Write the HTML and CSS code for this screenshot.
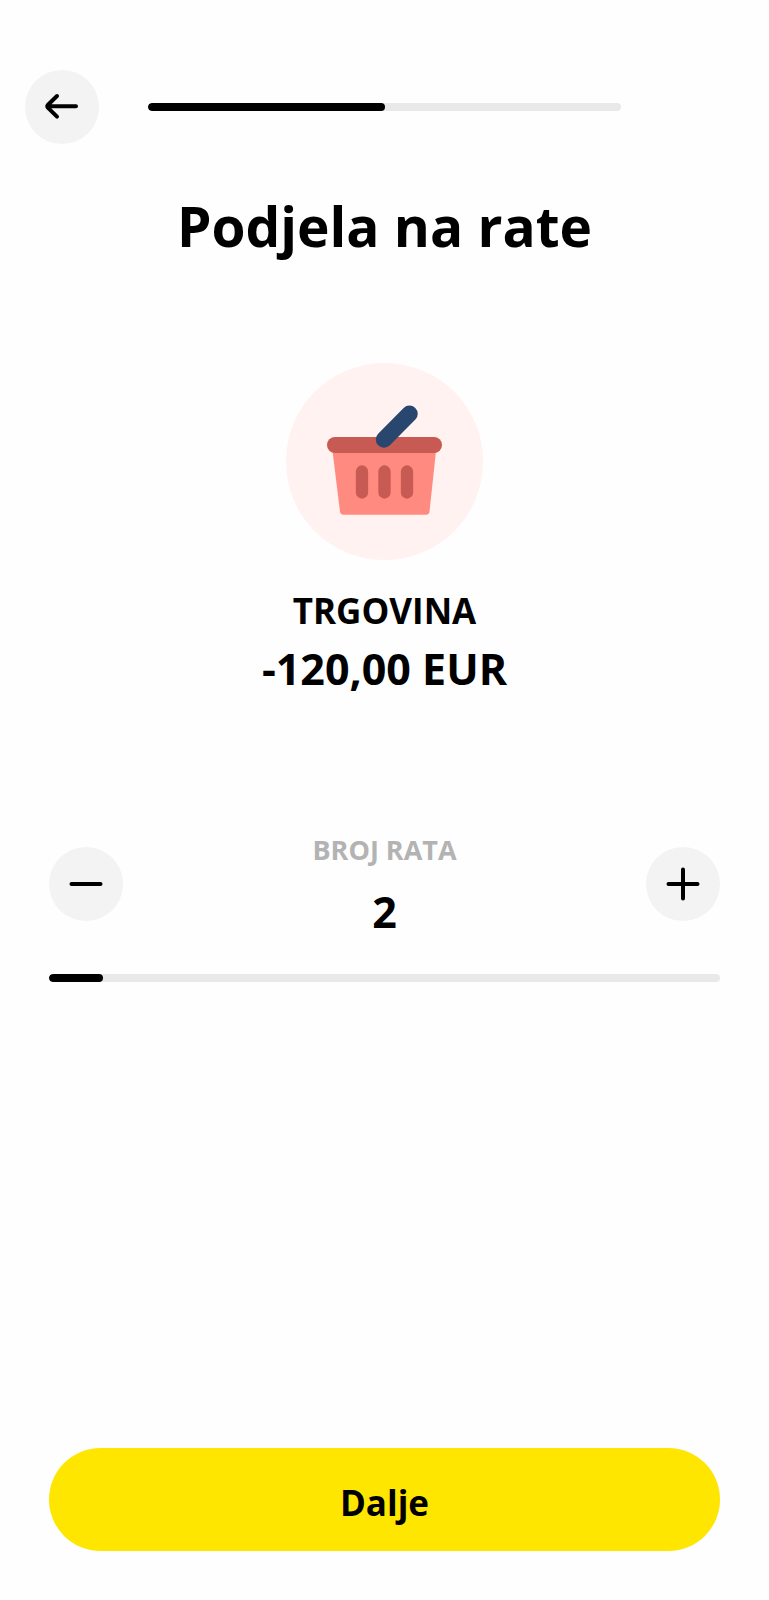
FILE: index.html
```html
<!DOCTYPE html>
<html lang="hr">
<head>
<meta charset="utf-8">
<meta name="viewport" content="width=device-width, initial-scale=1">
<title>Podjela na rate</title>
<link rel="stylesheet" href="styles.css">
</head>
<body>
<div class="screen">
  <header class="topbar">
    <button class="round-button" type="button" aria-label="Natrag">
      <svg class="icon" viewBox="0 0 74 74" aria-hidden="true"><path d="M24 36.300H51M32 26L22.800 35Q21.800 36.300 22.800 37.600L32 46.600"/></svg>
    </button>
    <div class="track" role="progressbar" aria-label="Korak" aria-valuenow="50" aria-valuemin="0" aria-valuemax="100">
      <div class="fill" style="width: 50%"></div>
    </div>
  </header>
  <main class="content">
    <h1 class="title">Podjela na rate</h1>
    <section class="purchase">
      <svg class="category" viewBox="0 0 197 197" aria-hidden="true">
        <circle cx="98.500" cy="98.500" r="98.500" fill="#fff2f0"/>
        <path d="M46.500 88H150L143.500 148.500Q143 151.700 140 151.700H57.500Q54.500 151.700 54 148.500Z" fill="#ff8a80"/>
        <rect x="41" y="74" width="115" height="16" rx="8" fill="#c75a52"/>
        <path d="M76 108.500V129.500M98.500 108.500V129.500M121 108.500V129.500" stroke="#c75a52" stroke-width="12.300" stroke-linecap="round"/>
        <path d="M98 76.500L123.500 50.800" stroke="#28466e" stroke-width="16.500" stroke-linecap="round"/>
      </svg>
      <h2 class="merchant">TRGOVINA</h2>
      <p class="amount">-120,00 EUR</p>
    </section>
    <section class="installments">
      <div class="stepper">
        <button class="round-button" type="button" aria-label="Manje rata">
          <svg class="icon" viewBox="0 0 74 74" aria-hidden="true"><path d="M22.500 37H51.500"/></svg>
        </button>
        <div class="count">
          <span class="count-label" id="count-label">BROJ RATA</span>
          <output class="count-value" aria-labelledby="count-label">2</output>
        </div>
        <button class="round-button" type="button" aria-label="Više rata">
          <svg class="icon" viewBox="0 0 74 74" aria-hidden="true"><path d="M22.500 37H51.500M37 22.500V51.500"/></svg>
        </button>
      </div>
      <div class="track" role="progressbar" aria-labelledby="count-label" aria-valuenow="8" aria-valuemin="0" aria-valuemax="100">
        <div class="fill" style="width: 8%"></div>
      </div>
    </section>
  </main>
  <footer class="footer">
    <button class="next" type="button">Dalje</button>
  </footer>
</div>
</body>
</html>
```
FILE: styles.css
```css
* {
  box-sizing: border-box;
}

body {
  margin: 0;
  background: #fefefe;
  color: #000;
  font-family: "Open Sans", "Noto Sans", sans-serif;
  font-weight: 700;
}

h1, h2, p {
  margin: 0;
  font-weight: 700;
}

button {
  border: 0;
  padding: 0;
  color: inherit;
  font: inherit;
  cursor: pointer;
}

.screen {
  display: flex;
  flex-direction: column;
  min-height: 100vh;
  padding-top: 70px;
}

.topbar {
  display: grid;
  grid-template-columns: 74px 1fr 74px;
  align-items: center;
  gap: 49px;
  padding: 0 25px;
}

.round-button {
  flex: none;
  width: 74px;
  height: 74px;
  border-radius: 50%;
  background: #f3f3f3;
}

.icon {
  display: block;
  width: 100%;
  fill: none;
  stroke: #000;
  stroke-width: 4;
  stroke-linecap: round;
  stroke-linejoin: round;
}

.track {
  height: 8px;
  border-radius: 4px;
  background: #e9e9e9;
  overflow: hidden;
}

.fill {
  height: 100%;
  border-radius: 4px;
  background: #000;
}

.content {
  flex: 1;
  padding: 46px 49px;
}

.title {
  font-size: 55px;
  line-height: 72px;
  text-align: center;
}

.purchase {
  display: flex;
  flex-direction: column;
  align-items: center;
  margin-top: 101px;
}

.category {
  width: 197px;
}

.merchant {
  margin-top: 29px;
  font-size: 35px;
  line-height: 44px;
}

.amount {
  margin-top: 8px;
  font-size: 43px;
  line-height: 56px;
}

.installments {
  margin-top: 135px;
}

.stepper {
  display: flex;
  align-items: center;
  justify-content: space-between;
  margin-bottom: 34px;
}

.count {
  display: flex;
  flex-direction: column;
  align-items: center;
  gap: 18px;
  padding-top: 2px;
}

.count-label {
  color: #b3b3b3;
  font-size: 27px;
  line-height: 32px;
}

.count-value {
  font-size: 43px;
  line-height: 56px;
}

.stepper .round-button {
  margin-bottom: 4px;
}

.footer {
  padding: 0 49px 49px;
}

.next {
  width: 100%;
  height: 103px;
  padding-top: 6px;
  border-radius: 52px;
  background: #ffe600;
  font-size: 35px;
}
```
